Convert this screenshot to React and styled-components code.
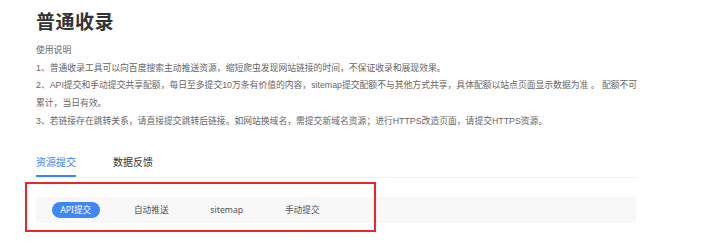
import React, { useState } from "react";
import styled, { createGlobalStyle } from "styled-components";

const GlobalStyle = createGlobalStyle`
  html, body {
    margin: 0;
    padding: 0;
    background: #fff;
  }
  body {
    font-family: "Noto Sans", "Noto Sans CJK SC", sans-serif;
  }
`;

const Page = styled.div`
  position: relative;
  width: 720px;
  height: 244px;
  overflow: hidden;
  padding: 10px 0 0 36px;
  box-sizing: border-box;
`;

const Content = styled.div`
  width: 600px;
`;

const Title = styled.h1`
  margin: 0;
  font-size: 19px;
  line-height: 24px;
  font-weight: 700;
  color: #333;
  letter-spacing: 0.5px;
`;

const Notes = styled.div`
  width: 604px;
  margin-top: 8px;
  font-family: "Liberation Sans", "Noto Sans CJK SC", sans-serif;
  font-size: 8.8px;
  line-height: 17.7px;
  color: #666;
`;

const Note = styled.p`
  margin: 0;
`;

const TabBar = styled.div`
  display: flex;
  gap: 37px;
  margin-top: 24px;
  border-bottom: 1px solid #f1f1f1;
`;

const Tab = styled.div`
  font-size: 10px;
  line-height: 14px;
  padding-bottom: 6px;
  color: ${(p) => (p.$active ? "#3d85f5" : "#333")};
  border-bottom: 2px solid ${(p) => (p.$active ? "#3d85f5" : "transparent")};
  cursor: pointer;
`;

const SubBar = styled.div`
  display: flex;
  align-items: center;
  height: 26px;
  margin-top: 19px;
  padding-left: 2px;
  background: #f8f8f8;
`;

const SubItem = styled.div`
  width: 75.5px;
  display: flex;
  justify-content: center;
  font-size: 8.7px;
  color: #555;
  cursor: pointer;
`;

const Pill = styled.span`
  display: inline-flex;
  align-items: center;
  justify-content: center;
  width: 48px;
  height: 16px;
  border-radius: 8px;
  background: ${(p) => (p.$active ? "#3f87f5" : "transparent")};
  color: ${(p) => (p.$active ? "#fff" : "#555")};
`;

const RedFrame = styled.div`
  position: absolute;
  left: 25px;
  top: 182px;
  width: 351px;
  height: 50px;
  box-sizing: border-box;
  border: 2px solid #e8262c;
  pointer-events: none;
`;

const notes = [
  "使用说明",
  "1、普通收录工具可以向百度搜索主动推送资源，缩短爬虫发现网站链接的时间，不保证收录和展现效果。",
  "2、API提交和手动提交共享配额，每日至多提交10万条有价值的内容，sitemap提交配额不与其他方式共享，具体配额以站点页面显示数据为准 。 配额不可累计，当日有效。",
  "3、若链接存在跳转关系，请直接提交跳转后链接。如网站换域名，需提交新域名资源；进行HTTPS改造页面，请提交HTTPS资源。",
];

const tabs = ["资源提交", "数据反馈"];
const methods = ["API提交", "自动推送", "sitemap", "手动提交"];

const App = () => {
  const [tab, setTab] = useState(0);
  const [method, setMethod] = useState(0);

  return (
    <Page>
      <GlobalStyle />
      <Content>
        <Title>普通收录</Title>
        <Notes>
          {notes.map((n) => (
            <Note key={n}>{n}</Note>
          ))}
        </Notes>
        <TabBar>
          {tabs.map((t, i) => (
            <Tab key={t} $active={tab === i} onClick={() => setTab(i)}>
              {t}
            </Tab>
          ))}
        </TabBar>
        <SubBar>
          {methods.map((m, i) => (
            <SubItem key={m} onClick={() => setMethod(i)}>
              <Pill $active={method === i}>{m}</Pill>
            </SubItem>
          ))}
        </SubBar>
      </Content>
      <RedFrame />
    </Page>
  );
};

export default App;
